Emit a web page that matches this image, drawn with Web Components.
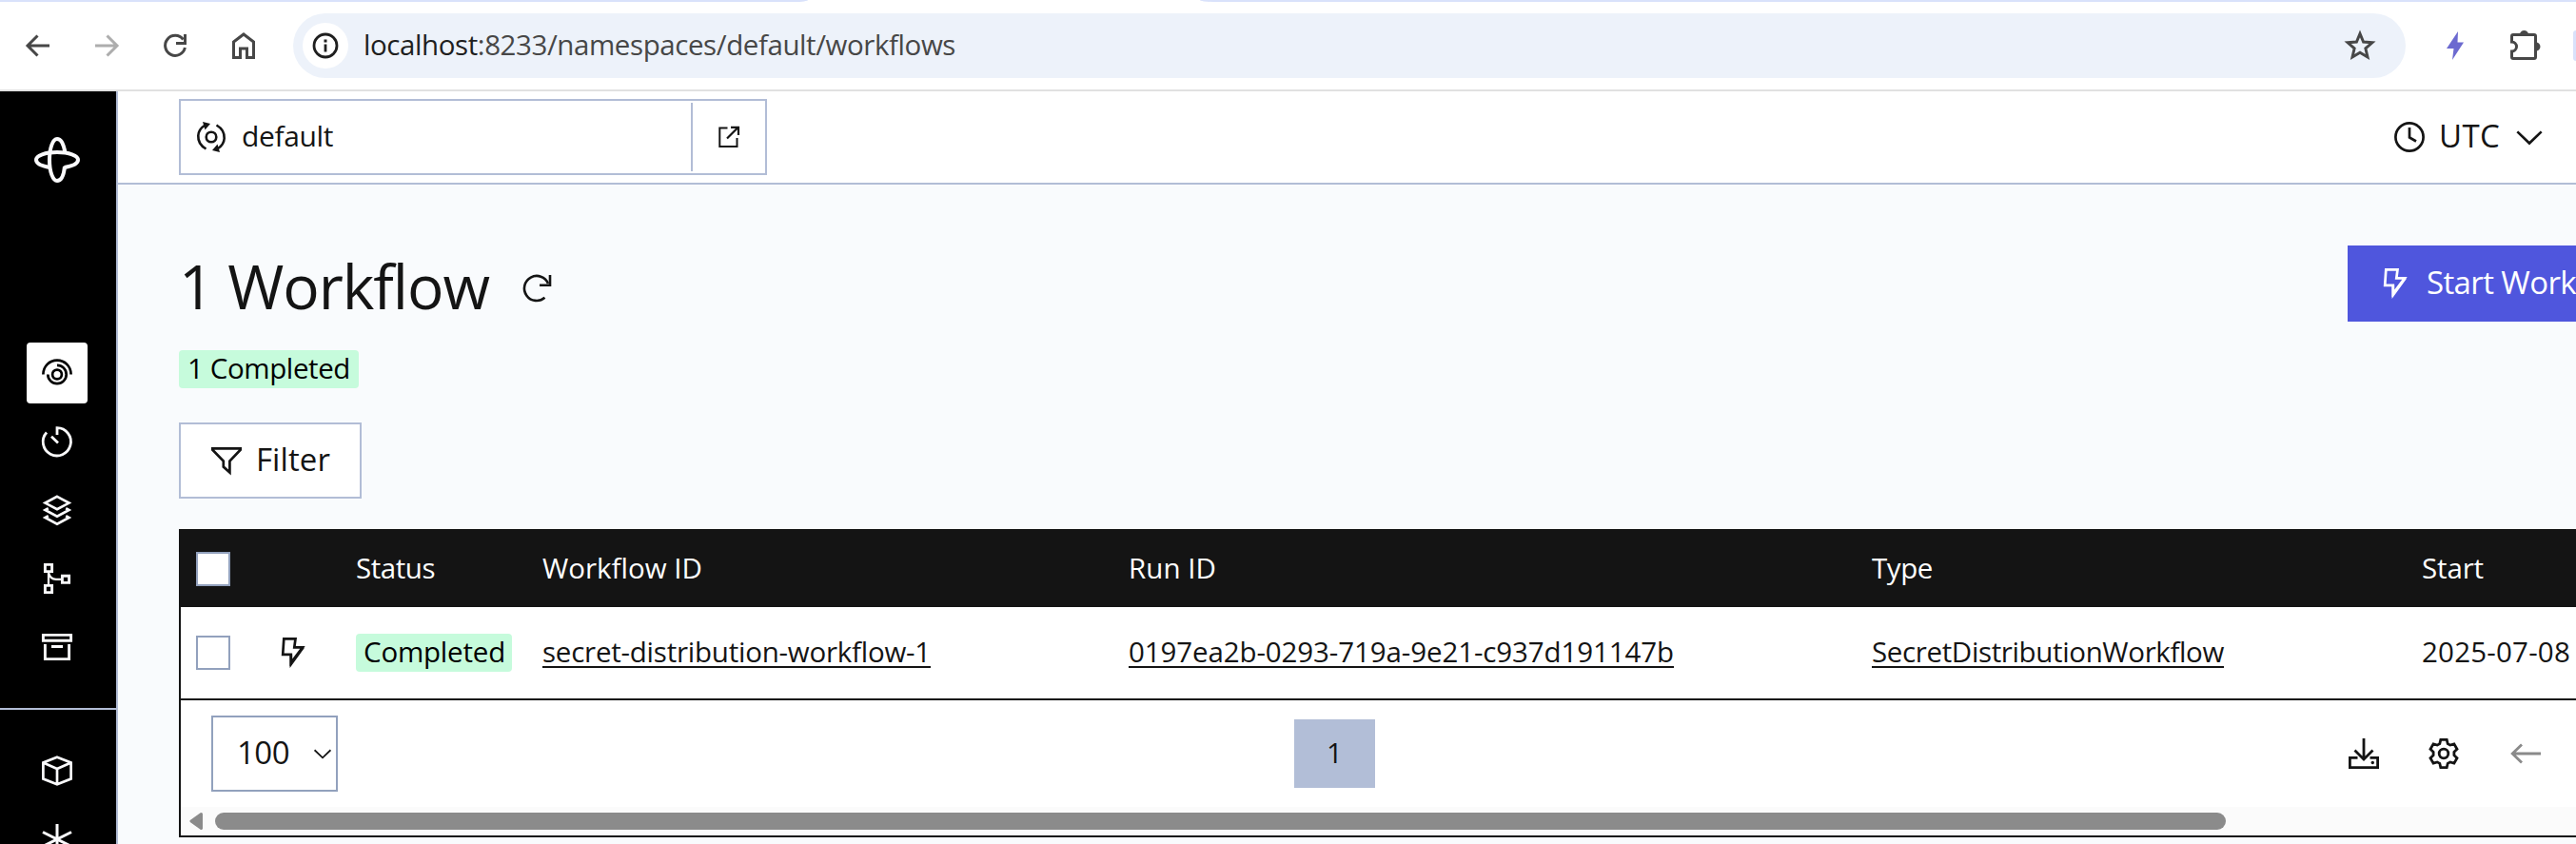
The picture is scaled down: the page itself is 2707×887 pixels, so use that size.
<!DOCTYPE html>
<html lang="en">
<head>
<meta charset="utf-8">
<title>Workflows</title>
<style>
html,body{margin:0;height:100%;overflow:hidden}
body{font-family:"Open Sans","Noto Sans",sans-serif;color:#141414;background:#fff}
</style>
</head>
<body>
<app-window></app-window>
<script>
const define = (name, html, after) => customElements.define(name, class extends HTMLElement {
  constructor() {
    super();
    this.attachShadow({ mode: 'open' }).innerHTML = html;
  }
  connectedCallback() { if (after) after(this); }
});

const ICONS = {
  back: [32, '<path d="M28 16H5M15.500 5.500 5 16l10.500 10.500" fill="none" stroke="currentColor" stroke-width="3"/>'],
  forward: [32, '<path d="M4 16H27M16.500 5.500 27 16 16.500 26.500" fill="none" stroke="currentColor" stroke-width="3"/>'],
  reload: [32, '<path d="M26.400 18A10.500 10.500 0 1 1 24.500 9.500" fill="none" stroke="currentColor" stroke-width="3"/><path d="M25 4h3v11H17v-3h8z" fill="currentColor"/>'],
  home: [32, '<path d="M5.500 28.500V12L16 4l10.500 8v16.500h-7V19h-7v9.500z" fill="none" stroke="currentColor" stroke-width="3"/>'],
  info: [32, '<circle cx="16" cy="16" r="12" fill="none" stroke="currentColor" stroke-width="2.800"/><path d="M14.600 14.500h2.800v8h-2.800zM14.500 9.500h3v3h-3z" fill="currentColor"/>'],
  star: [32, '<path d="M16 4.300 19.200 12l8.300.700-6.300 5.400 1.900 8.100-7.100-4.300-7.100 4.300 1.900-8.100-6.300-5.400 8.300-.700z" transform="translate(-2 -1.500) scale(1.125)" fill="none" stroke="currentColor" stroke-width="2.600"/>'],
  boltfill: [32, '<path d="M19 1 7 19h7.500L13 31 25 12.500h-6.500z" fill="currentColor"/>'],
  puzzle: [34, '<path d="M6.500 5.500H27A1.500 1.500 0 0 1 28.500 7v22A1.500 1.500 0 0 1 27 30.500H5A1.500 1.500 0 0 1 3.500 29v-6a5 5 0 0 0 0-10V7A1.500 1.500 0 0 1 5 5.500z" fill="none" stroke="currentColor" stroke-width="3"/><path d="M12 5a4.500 4 0 0 1 9 0zM29 13.500a4.500 4.500 0 0 1 0 9z" fill="currentColor"/>'],
  logo: [48, '<g fill="none" stroke="currentColor" stroke-width="4"><path d="M32.500 16.800C31 7.500 28 2 24 2 19.500 2 16 11.500 16 24s3.500 22 8 22c4 0 7-5.500 8-15"/><path d="M16.500 32C7.500 30.500 2 28 2 24c0-4.500 9.500-8 22-8s22 3.500 22 8c0 4-5.500 6.500-14.500 8"/></g>'],
  namespace: [32, '<g fill="none" stroke="currentColor" stroke-width="2.600"><circle cx="16" cy="16" r="5.300"/><path d="M10.500 28.500C4.500 25 2 19.500 2.300 14.500 2.600 9.500 5.500 6 9.500 3.500M21.500 3.500c6 3.500 8.500 9 8.200 14-.300 5-3.200 8.500-7.200 11"/></g><path d="M7 0l8 2-5.500 6.500zM25 32l-8-2 5.500-6.500z" fill="currentColor"/>'],
  external: [24, '<path d="M10.500 2.500H2.300V22H20.500V13" fill="none" stroke="currentColor" stroke-width="2"/><path d="M14 1.800h8V10M21.500 2 10 13.500" fill="none" stroke="currentColor" stroke-width="2.200"/>'],
  clock: [32, '<circle cx="16" cy="16" r="14.600" fill="none" stroke="currentColor" stroke-width="2.700"/><path d="M16 6v10.500l7 4" fill="none" stroke="currentColor" stroke-width="2.700"/>'],
  chevron: [32, '<path d="M2.500 10 16 23 29.500 10" fill="none" stroke="currentColor" stroke-width="2.800"/>'],
  bolt: [32, '<path d="M6.300 1.300H18.500L17.300 10.300H26L13.800 26.500V17.800H5.200z" fill="none" stroke="currentColor" stroke-width="2.700"/><path d="M12.500 18h2.600v8.500L26 10.300l2 .5L12.600 32z" fill="currentColor"/>'],
  refresh: [32, '<path d="M24.500 25.800A13 13 0 1 1 28 11" fill="none" stroke="currentColor" stroke-width="2.600"/><path d="M30 2V12.700H19" fill="none" stroke="currentColor" stroke-width="2.600"/>'],
  filter: [32, '<path d="M1.300 3.300H30.700V4.600L19.400 16.500V28.500L12.800 22.600V16.500L1.300 4.600z" fill="none" stroke="currentColor" stroke-width="2.700"/>'],
  workflows: [32, '<g fill="none" stroke="currentColor" stroke-width="2.700"><circle cx="16" cy="17.500" r="4.900"/><path d="M1.400 17.500C1.400 9 8 2.700 16 2.700S30.600 9 30.600 17.500"/><path d="M6.300 17.500A9.700 9.700 0 1 0 16 7.800"/></g>'],
  timer: [32, '<path d="M5 6.500A14.600 14.600 0 1 0 16 1.700V9M10 10.800 17 17.500" fill="none" stroke="currentColor" stroke-width="2.800"/>'],
  layers: [32, '<g fill="none" stroke="currentColor" stroke-width="2.700"><path d="M16 1.900 28.500 8.600 16 15.300 3.500 8.600zM6.800 14.200 3.500 16 16 22.700 28.500 16l-3.300-1.800M6.800 22.200l-3.300 1.800L16 30.700 28.500 24l-3.300-1.800"/></g>'],
  nexus: [32, '<g fill="none" stroke="currentColor" stroke-width="2.900"><path d="M3.400 1.400h7.200v7.200H3.400zM3.400 23.400h7.200v7.200H3.400zM21.400 13.200h7.200v7.200h-7.200z"/><path d="M7 9v14M7 9.500c1 5 4 7.300 8 7.300h6" stroke-width="2.200"/></g>'],
  archive: [32, '<g fill="none" stroke="currentColor" stroke-width="2.900"><path d="M1.400 3.400h29.200v5.900H1.400zM3.400 13v15.600h25.200V13M10 15.500h12"/></g>'],
  cube: [32, '<path d="M16 1.800 30.600 7.500v17L16 30.300 1.400 24.500v-17zM1.400 7.500 16 14l14.600-6.500M16 14v16" fill="none" stroke="currentColor" stroke-width="2.700"/>'],
  asterisk: [32, '<path d="M16 0v32M1 8.500l30 15M31 8.500l-30 15" fill="none" stroke="currentColor" stroke-width="3"/>'],
  download: [32, '<g fill="none" stroke="currentColor" stroke-width="2.800"><path d="M16 0v22M6.500 12.500 16 22l9.500-9.500"/><path d="M9.500 20.400H1.400v10.200h29.200V20.400H22.500"/></g><circle cx="25.300" cy="25.500" r="1.700" fill="currentColor"/>'],
  gear: [32, '<g fill="none" stroke="currentColor" stroke-width="2.800"><circle cx="16" cy="16" r="4.800"/><path d="M12.800 1.400h6.400l1 4.200 2.600 1.500 4.100-1.200 3.100 5.400-3.100 3v3.400l3.100 3-3.100 5.400-4.100-1.200-2.600 1.500-1 4.200h-6.400l-1-4.200-2.600-1.500-4.100 1.200L2 20.700l3.100-3v-3.400L2 11.300l3.100-5.400 4.100 1.200 2.600-1.500z"/></g>'],
  left: [32, '<path d="M32 16H2M12 6.500 2.200 16l9.800 9.500" fill="none" stroke="currentColor" stroke-width="2.800"/>'],
};

define('ui-icon', '<style>:host{display:block;flex:none}svg{display:block;overflow:visible}</style><span></span>', el => {
  const [box, body] = ICONS[el.getAttribute('name')];
  const size = el.getAttribute('size') || box;
  el.shadowRoot.querySelector('span').innerHTML =
    `<svg width="${size}" height="${size}" viewBox="0 0 ${box} ${box}">${body}</svg>`;
});

/* Single line of text whose tracking is adjusted to fill the given width. */
define('ui-text', '<style>:host{display:block;flex:none;white-space:nowrap;padding-bottom:2px}span{display:block;width:max-content}</style><span><slot></slot></span>', el => {
  const w = parseFloat(el.getAttribute('w'));
  if (!w) return;
  const span = el.shadowRoot.querySelector('span');
  const n = el.textContent.length;
  span.style.letterSpacing = ((w - span.getBoundingClientRect().width) / n) + 'px';
  el.style.width = w + 'px';
});

define('ui-badge', `<style>
:host{display:flex;align-items:center;box-sizing:border-box;height:40px;padding:0 9px;border-radius:4px;background:#c6fbdc;color:#000;font-size:29.5px;line-height:36px}
</style><slot></slot>`);

define('ui-checkbox', `<style>
:host{display:block;box-sizing:border-box;width:36px;height:36px;border:2px solid #92a1bd;background:#fff}
</style>`);

define('browser-bar', `<style>
:host{display:block;height:96px;box-sizing:border-box;border-bottom:2px solid #e1e1e1;background:#fff;color:#474747}
.tabs{display:flex;height:2px;justify-content:space-between}
.tabs i{height:2px;background:#d9e2fb}
.tabs .a{width:849px;border-bottom-right-radius:14px 2px}
.tabs .b{width:1446px;border-bottom-left-radius:14px 2px}
.bar{display:flex;height:92px;align-items:center;padding-left:24px;overflow:hidden}
.bar>*{flex:none}
.nav{display:flex;gap:40px;width:284px}
.fwd{color:#adadad}
.pill{display:flex;align-items:center;box-sizing:border-box;width:2220px;height:68px;border-radius:34px;background:#edf2fa;padding:0 32px 0 10px}
.site{display:grid;place-items:center;width:48px;height:48px;border-radius:50%;background:#fff;color:#1f1f1f}
.url{margin-left:16px;flex:1;font-size:29.5px;line-height:40px}
.url b{font-weight:400;color:#1f1f1f}
.ext{margin-left:36px;color:#6c6ad0}
.puz{margin-left:40px;color:#474747}
.side{width:20px;height:32px;margin-left:34px;border-radius:3px;background:#d9e2fb}
</style>
<div class="tabs"><i class="a"></i><i class="b"></i></div>
<div class="bar">
<div class="nav"><ui-icon name="back"></ui-icon><ui-icon name="forward" class="fwd"></ui-icon><ui-icon name="reload"></ui-icon><ui-icon name="home"></ui-icon></div>
<div class="pill"><div class="site"><ui-icon name="info"></ui-icon></div><div class="url"><ui-text w="622"><b>localhost</b>:8233/namespaces/default/workflows</ui-text></div><ui-icon name="star"></ui-icon></div>
<ui-icon class="ext" name="boltfill"></ui-icon><ui-icon class="puz" name="puzzle"></ui-icon><span class="side"></span>
</div>`);

define('side-nav', `<style>
:host{display:flex;flex-direction:column;align-items:center;box-sizing:border-box;width:124px;flex:none;border-right:2px solid #b2bdd6;background:#000;color:#fafafc;overflow:hidden}
.logo{margin:48px 0 168px;padding-right:2px}
.item{display:grid;place-items:center;width:64px;height:64px;border-radius:4px;margin:0 2px 8px 0;flex:none}
.on{background:#fff;color:#000}
hr{width:100%;height:2px;margin:24px 0 32px;border:0;background:#b2bdd6;flex:none}
</style>
<ui-icon class="logo" name="logo"></ui-icon>
<div class="item on"><ui-icon name="workflows"></ui-icon></div>
<div class="item"><ui-icon name="timer"></ui-icon></div>
<div class="item"><ui-icon name="layers"></ui-icon></div>
<div class="item"><ui-icon name="nexus"></ui-icon></div>
<div class="item"><ui-icon name="archive"></ui-icon></div>
<hr>
<div class="item"><ui-icon name="cube"></ui-icon></div>
<div class="item"><ui-icon name="asterisk"></ui-icon></div>`);

define('top-bar', `<style>
:host{display:flex;justify-content:space-between;align-items:center;box-sizing:border-box;height:98px;flex:none;padding:0 34px 0 64px;border-bottom:2px solid #b2bdd6;background:#fff}
.ns{display:flex;align-items:center;box-sizing:border-box;width:618px;height:80px;border:2px solid #b2bdd6;padding-left:16px}
.ns ui-text{margin-left:16px;font-size:30px;line-height:38px}
.open{display:grid;place-items:center;width:76px;height:72px;border-left:2px solid #b2bdd6;margin-left:auto}
.tz{display:flex;align-items:center}
.tz ui-text{font-size:33px;line-height:44px;margin:0 16px 0 15px}
</style>
<div class="ns"><ui-icon name="namespace"></ui-icon><ui-text w="96">default</ui-text><div class="open"><ui-icon name="external"></ui-icon></div></div>
<div class="tz"><ui-icon name="clock"></ui-icon><ui-text w="64">UTC</ui-text><ui-icon name="chevron" size="30"></ui-icon></div>`);

define('page-heading', `<style>
:host{display:flex;justify-content:space-between;height:174px}
.title{display:flex;align-items:center;height:90px;font-size:64px;line-height:86px}
.title ui-text{margin-right:34px;padding-bottom:4px}
ui-badge{margin-top:20px;width:189px}
.btn{display:flex;align-items:center;box-sizing:border-box;width:240px;height:80px;background:#4f56dd;color:#fff;padding-left:34px;font-size:33px;line-height:44px;flex:none}
.btn ui-text{margin-left:17px}
</style>
<div><div class="title"><ui-text w="326">1 Workflow</ui-text><ui-icon name="refresh"></ui-icon></div>
<ui-badge><ui-text w="171">1 Completed</ui-text></ui-badge></div>
<div class="btn"><ui-icon name="bolt"></ui-icon><ui-text w="157">Start Work</ui-text></div>`);

define('filter-button', `<style>
:host{display:flex;align-items:center;box-sizing:border-box;width:192px;height:80px;border:2px solid #b2bdd6;background:#fff;padding-left:32px;font-size:33px;line-height:44px}
ui-text{margin-left:15px}
</style><ui-icon name="filter"></ui-icon><ui-text w="78">Filter</ui-text>`);

define('workflow-table', `<style>
:host{display:block;box-sizing:border-box;width:2620px;height:324px;border:2px solid #141414;background:#fff;font-size:29.5px;line-height:38px}
.row{display:grid;grid-template-columns:90px 78px 196px 616px 781px 578px 1fr;align-items:center;box-sizing:border-box;padding-left:16px}
.head{height:80px;background:#141414;color:#fff}
.body{height:98px;border-bottom:2px solid #141414}
.body ui-icon{margin-left:-4px}
.link{display:block;box-sizing:border-box;width:max-content;height:32px;border-bottom:2px solid #141414}
.link ui-text{line-height:29px;padding:0}
ui-badge{width:164px;padding:0 8px}
.foot{display:flex;align-items:center;height:112px;padding-left:32px}
.sel{display:flex;align-items:center;box-sizing:border-box;width:133px;height:80px;border:2px solid #92a1bd;padding-left:25px;font-size:33px;line-height:42px}
.sel ui-icon{margin-left:25px}
.page{display:grid;place-items:center;width:85px;height:72px;margin-left:1005px;background:#b2bed7}
.acts{display:flex;gap:52px;margin-left:1023px}
.acts .off{color:#8a8a8a;margin-left:2px}
.scroll{display:flex;align-items:center;height:30px;background:#fbfbfb;padding-left:9px}
.tri{width:14px;height:18px;margin-right:13px}
.tri svg{display:block}
.thumb{width:2113px;height:18px;border-radius:9px;background:#8b8b8b}
</style>
<div class="row head"><ui-checkbox></ui-checkbox><span></span><ui-text w="83">Status</ui-text><ui-text w="168">Workflow ID</ui-text><ui-text w="92">Run ID</ui-text><ui-text w="64">Type</ui-text><ui-text w="65">Start</ui-text></div>
<div class="row body"><ui-checkbox></ui-checkbox><span><ui-icon name="bolt"></ui-icon></span><ui-badge><ui-text w="149">Completed</ui-text></ui-badge>
<a class="link"><ui-text w="408">secret-distribution-workflow-1</ui-text></a>
<a class="link"><ui-text w="573">0197ea2b-0293-719a-9e21-c937d191147b</ui-text></a>
<a class="link"><ui-text w="370">SecretDistributionWorkflow</ui-text></a><ui-text w="156">2025-07-08</ui-text></div>
<div class="foot"><div class="sel"><ui-text w="55">100</ui-text><ui-icon name="chevron" size="20"></ui-icon></div><div class="page"><ui-text>1</ui-text></div>
<div class="acts"><ui-icon name="download"></ui-icon><ui-icon name="gear"></ui-icon><ui-icon class="off" name="left"></ui-icon></div></div>
<div class="scroll"><span class="tri"><svg width="14" height="18"><path d="M12.500 1.500 2 9l10.500 7.500z" fill="#8b8b8b" stroke="#8b8b8b" stroke-width="3" stroke-linejoin="round"/></svg></span><span class="thumb"></span></div>`);

define('app-window', `<style>
:host{display:flex;flex-direction:column;width:2707px;height:887px;overflow:hidden;background:#fff}
.app{display:flex;flex:1;min-height:0}
.main{display:flex;flex-direction:column;width:2583px;background:#f9fbfd;overflow:hidden}
.content{display:flex;flex-direction:column;padding:64px 0 0 64px}
page-heading{width:2519px;margin-bottom:12px}
filter-button{margin-bottom:32px}
</style>
<browser-bar></browser-bar>
<div class="app"><side-nav></side-nav><div class="main"><top-bar></top-bar>
<div class="content"><page-heading></page-heading><filter-button></filter-button><workflow-table></workflow-table></div></div></div>`);
</script>
</body>
</html>
